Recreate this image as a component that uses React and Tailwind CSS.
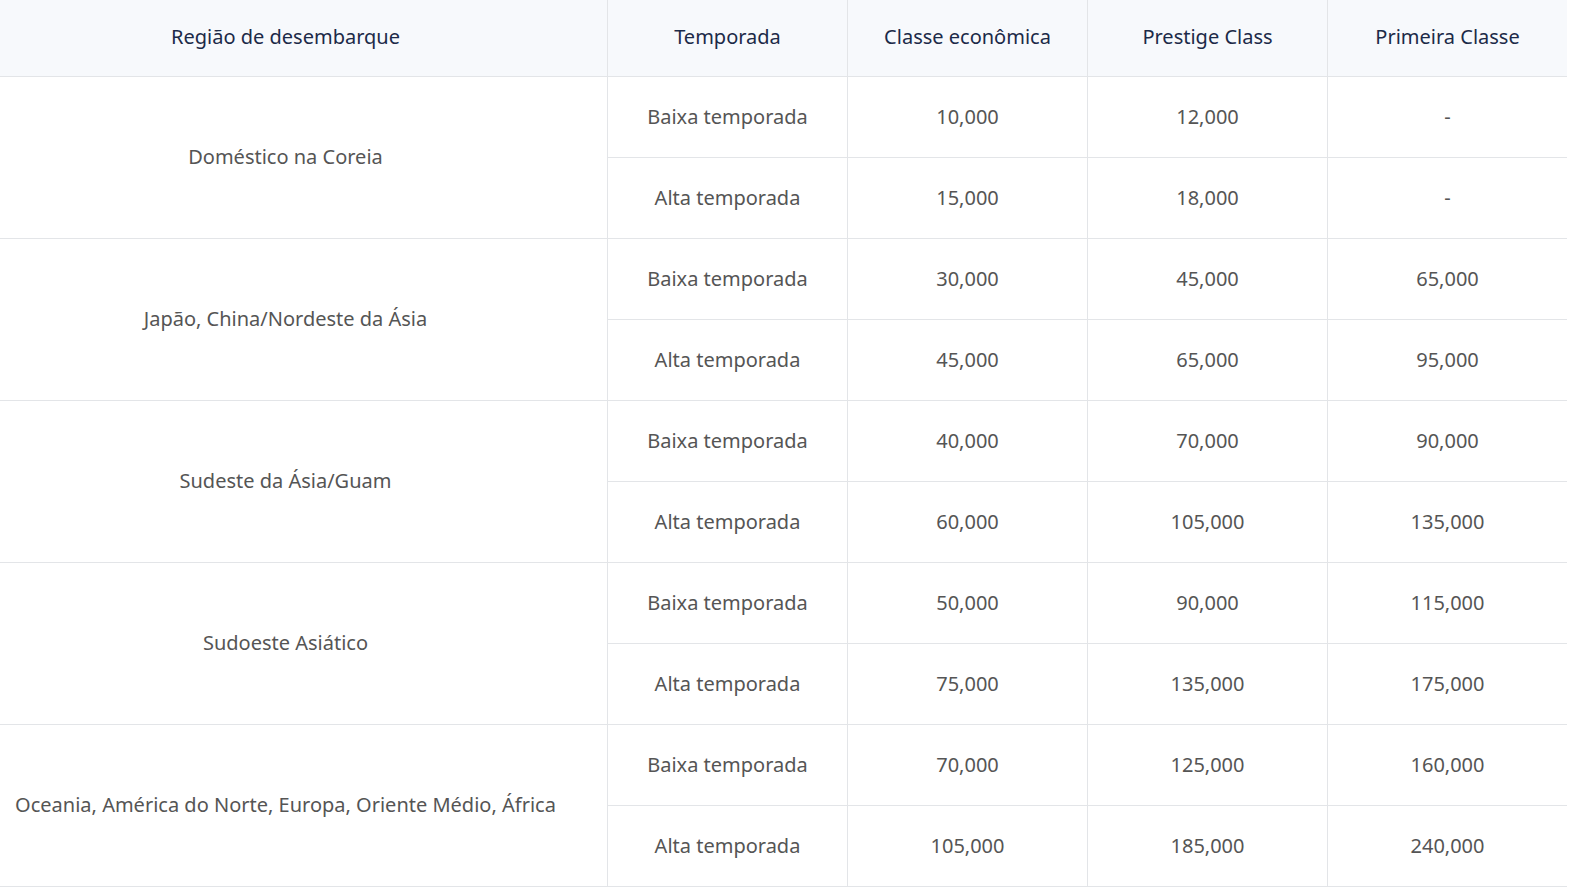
const columns = ['Temporada', 'Classe econômica', 'Prestige Class', 'Primeira Classe'];

const regions = [
    {
        name: 'Doméstico na Coreia',
        rows: [
            ['Baixa temporada', '10,000', '12,000', '-'],
            ['Alta temporada', '15,000', '18,000', '-'],
        ],
    },
    {
        name: 'Japão, China/Nordeste da Ásia',
        rows: [
            ['Baixa temporada', '30,000', '45,000', '65,000'],
            ['Alta temporada', '45,000', '65,000', '95,000'],
        ],
    },
    {
        name: 'Sudeste da Ásia/Guam',
        rows: [
            ['Baixa temporada', '40,000', '70,000', '90,000'],
            ['Alta temporada', '60,000', '105,000', '135,000'],
        ],
    },
    {
        name: 'Sudoeste Asiático',
        rows: [
            ['Baixa temporada', '50,000', '90,000', '115,000'],
            ['Alta temporada', '75,000', '135,000', '175,000'],
        ],
    },
    {
        name: 'Oceania, América do Norte, Europa, Oriente Médio, África',
        rows: [
            ['Baixa temporada', '70,000', '125,000', '160,000'],
            ['Alta temporada', '105,000', '185,000', '240,000'],
        ],
    },
];

const headCell = 'flex items-center justify-center pb-[3px] bg-[#f7f9fc] border-b border-[#e3e5e8] text-[20px] text-[#1c2a48]';
const bodyCell = 'flex items-center justify-center border-b border-[#e3e5e8] text-[20px] text-[#555555]';

const RegionRows = ({ region }) => (
    <>
        <div className={`${bodyCell} row-span-2 border-r pr-[36px] pb-[2px]`}>{region.name}</div>
        {region.rows.map((row, r) => (
            <div key={r} className="contents">
                {row.map((value, i) => (
                    <div key={i} className={`${bodyCell} ${i < row.length - 1 ? 'border-r' : ''}`}>
                        {value}
                    </div>
                ))}
            </div>
        ))}
    </>
);

export default function App() {
    return (
        <div className="min-h-screen bg-white" style={{ fontFamily: '"Noto Sans", "Open Sans", sans-serif' }}>
            <div className="grid w-[1567px] grid-cols-[608px_240px_240px_240px_239px] grid-rows-[77px_repeat(10,81px)]">
                <div className={`${headCell} border-r pr-[36px]`}>Região de desembarque</div>
                {columns.map((col, i) => (
                    <div key={col} className={`${headCell} ${i < columns.length - 1 ? 'border-r' : ''}`}>
                        {col}
                    </div>
                ))}
                {regions.map((region) => (
                    <RegionRows key={region.name} region={region} />
                ))}
            </div>
        </div>
    );
}
